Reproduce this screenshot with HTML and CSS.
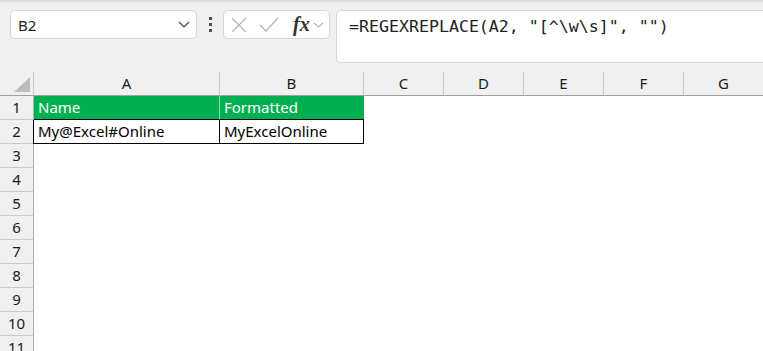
FILE: index.html
```html
<!DOCTYPE html>
<html lang="en">
<head>
<meta charset="utf-8">
<title>Sheet</title>
<link rel="stylesheet" href="styles.css">
</head>
<body>
<div class="app">
  <div class="toolbar">
    <div class="namebox">
      <span class="ref">B2</span>
      <svg class="chev" width="12" height="7" viewBox="0 0 12 7"><path d="M1 1 L6 6 L11 1" fill="none" stroke="#444" stroke-width="1.2"/></svg>
    </div>
    <div class="dots"><i></i><i></i><i></i></div>
    <div class="fnbox">
      <svg class="ico-x" width="16" height="16" viewBox="0 0 16 16"><path d="M1 1 L15 15 M15 1 L1 15" stroke="#b4b4b4" stroke-width="1.3" fill="none"/></svg>
      <svg class="ico-check" width="20" height="16" viewBox="0 0 20 16"><path d="M1 8 L7 14 L19 1" stroke="#b4b4b4" stroke-width="1.3" fill="none"/></svg>
      <span class="fx">fx</span>
      <svg class="chev-sm" width="11" height="6" viewBox="0 0 11 6"><path d="M1 1 L5.5 5 L10 1" fill="none" stroke="#8a8a8a" stroke-width="1"/></svg>
    </div>
    <div class="formula">=REGEXREPLACE(A2, "[^\w\s]", "")</div>
  </div>
  <div class="sheet">
    <div class="corner"><div class="tri"></div></div>
    <div class="colh">A</div><div class="colh">B</div><div class="colh">C</div><div class="colh">D</div><div class="colh">E</div><div class="colh">F</div><div class="colh">G</div>

    <div class="rowh">1</div>
    <div class="cell hdr sep">Name</div><div class="cell hdr">Formatted</div>
    <div class="cell"></div><div class="cell"></div><div class="cell"></div><div class="cell"></div><div class="cell"></div>

    <div class="rowh">2</div>
    <div class="cell dat first">My@Excel#Online</div><div class="cell dat">MyExcelOnline</div>
    <div class="cell"></div><div class="cell"></div><div class="cell"></div><div class="cell"></div><div class="cell"></div>

    <div class="rowh">3</div><div class="cell"></div><div class="cell"></div><div class="cell"></div><div class="cell"></div><div class="cell"></div><div class="cell"></div><div class="cell"></div>
    <div class="rowh">4</div><div class="cell"></div><div class="cell"></div><div class="cell"></div><div class="cell"></div><div class="cell"></div><div class="cell"></div><div class="cell"></div>
    <div class="rowh">5</div><div class="cell"></div><div class="cell"></div><div class="cell"></div><div class="cell"></div><div class="cell"></div><div class="cell"></div><div class="cell"></div>
    <div class="rowh">6</div><div class="cell"></div><div class="cell"></div><div class="cell"></div><div class="cell"></div><div class="cell"></div><div class="cell"></div><div class="cell"></div>
    <div class="rowh">7</div><div class="cell"></div><div class="cell"></div><div class="cell"></div><div class="cell"></div><div class="cell"></div><div class="cell"></div><div class="cell"></div>
    <div class="rowh">8</div><div class="cell"></div><div class="cell"></div><div class="cell"></div><div class="cell"></div><div class="cell"></div><div class="cell"></div><div class="cell"></div>
    <div class="rowh">9</div><div class="cell"></div><div class="cell"></div><div class="cell"></div><div class="cell"></div><div class="cell"></div><div class="cell"></div><div class="cell"></div>
    <div class="rowh">10</div><div class="cell"></div><div class="cell"></div><div class="cell"></div><div class="cell"></div><div class="cell"></div><div class="cell"></div><div class="cell"></div>
    <div class="rowh">11</div><div class="cell"></div><div class="cell"></div><div class="cell"></div><div class="cell"></div><div class="cell"></div><div class="cell"></div><div class="cell"></div>
  </div>
</div>
</body>
</html>
```

FILE: styles.css
```css
html, body {
  margin: 0;
  padding: 0;
}
body {
  width: 763px;
  height: 351px;
  overflow: hidden;
  background: #f0f0f0;
  font-family: "Noto Sans", "Open Sans", sans-serif;
  color: #000;
}
.app {
  width: 763px;
  height: 351px;
  overflow: hidden;
}
.toolbar {
  height: 72px;
  box-sizing: border-box;
  padding: 10px 0 0 10px;
  display: flex;
  align-items: flex-start;
  background: linear-gradient(#d9d9d9 0px, #ececec 3px, #f0f0f0 5px);
}
.toolbar > * {
  flex-shrink: 0;
}
.namebox {
  width: 187px;
  height: 29px;
  box-sizing: border-box;
  background: #fff;
  border: 1px solid #d6d6d6;
  border-radius: 5px;
  display: flex;
  align-items: center;
  justify-content: space-between;
  padding: 0 6px 0 7px;
}
.ref {
  font-size: 15px;
  color: #222;
}
.dots {
  width: 26px;
  height: 29px;
  display: flex;
  flex-direction: column;
  align-items: center;
  justify-content: center;
  gap: 3px;
}
.dots i {
  display: block;
  width: 3px;
  height: 3px;
  background: #505050;
}
.fnbox {
  width: 107px;
  height: 29px;
  box-sizing: border-box;
  background: #fff;
  border: 1px solid #d6d6d6;
  border-radius: 5px;
  display: flex;
  align-items: center;
  padding-left: 7px;
}
.ico-x { margin-right: 12px; }
.ico-check { margin-right: 14px; }
.fx {
  font-family: "Liberation Serif", "DejaVu Serif", serif;
  font-style: italic;
  font-weight: bold;
  font-size: 20px;
  color: #333;
  line-height: 20px;
  margin-top: -2px;
  margin-right: 3px;
}
.formula {
  margin-left: 6px;
  width: 440px;
  height: 53px;
  box-sizing: border-box;
  background: #fff;
  border: 1px solid #d6d6d6;
  border-right: none;
  border-radius: 5px 0 0 5px;
  padding: 5px 0 0 12px;
  font-family: "DejaVu Sans Mono", "Liberation Mono", monospace;
  font-size: 16.6px;
  line-height: 22px;
  color: #222;
  white-space: pre;
}
.sheet {
  display: grid;
  grid-template-columns: 34px 186px 144px 80px 80px 80px 80px 80px;
  grid-auto-rows: 24px;
  background: #fff;
}
.corner, .colh {
  background: #f0f0f0;
  border-right: 1px solid #c8c8c8;
  border-bottom: 1px solid #9e9e9e;
  box-sizing: border-box;
}
.corner {
  display: flex;
  justify-content: flex-end;
  align-items: flex-end;
  padding: 0 3px 3px 0;
  border-right-color: #c8c8c8;
}
.tri {
  width: 16px;
  height: 15px;
  background: #bdbdbd;
  clip-path: polygon(100% 0, 100% 100%, 0 100%);
}
.colh {
  font-size: 15px;
  line-height: 23px;
  text-align: center;
  color: #1a1a1a;
}
.rowh {
  background: #f0f0f0;
  border-right: 1px solid #b0b0b0;
  border-bottom: 1px solid #c8c8c8;
  box-sizing: border-box;
  font-size: 15px;
  line-height: 23px;
  text-align: center;
  color: #1a1a1a;
}
.cell {
  box-sizing: border-box;
  font-size: 15px;
  line-height: 23px;
  padding-left: 4px;
  white-space: nowrap;
  overflow: hidden;
}
.hdr {
  background: #00b050;
  color: #fff;
  border-bottom: 1px solid #000;
}
.hdr.sep {
  border-right: 1px solid rgba(255,255,255,0.55);
}
.dat {
  border-right: 1px solid #000;
  border-bottom: 1px solid #000;
}
.dat.first {
  box-shadow: -1px 0 0 #000;
}
```
